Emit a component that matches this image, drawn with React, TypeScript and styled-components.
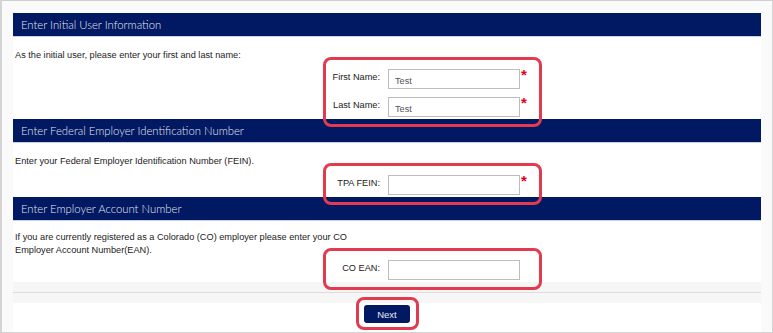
import React from 'react';
import styled, { createGlobalStyle } from 'styled-components';

const GlobalStyle = createGlobalStyle`
    html, body {
        margin: 0;
        padding: 0;
        background: #ffffff;
    }
    * {
        box-sizing: border-box;
    }
`;

const sections = [
    {
        id: 'user',
        title: 'Enter Initial User Information',
        text: 'As the initial user, please enter your first and last name:',
        top: 12,
        gap: 7,
        fields: [
            { label: 'First Name:', value: 'Test', required: true },
            { label: 'Last Name:', value: 'Test', required: true },
        ],
    },
    {
        id: 'fein',
        title: 'Enter Federal Employer Identification Number',
        text: 'Enter your Federal Employer Identification Number (FEIN).',
        top: 12,
        gap: 7,
        fields: [{ label: 'TPA FEIN:', value: '', required: true }],
    },
    {
        id: 'ean',
        title: 'Enter Employer Account Number',
        text: 'If you are currently registered as a Colorado (CO) employer please enter your CO Employer Account Number(EAN).',
        top: 10,
        gap: 3,
        fields: [{ label: 'CO EAN:', value: '', required: false }],
    },
];

const App = () => {
    return (
        <>
            <GlobalStyle />
            <Page>
                <Panel>
                    {sections.map((section) => (
                        <Section key={section.id}>
                            <SectionHeader>{section.title}</SectionHeader>
                            <SectionBody $top={section.top}>
                                <Description>{section.text}</Description>
                                <Fields $gap={section.gap}>
                                    <Highlight />
                                    {section.fields.map((field) => (
                                        <React.Fragment key={field.label}>
                                            <Label>{field.label}</Label>
                                            <InputCell>
                                                <Input type="text" defaultValue={field.value} />
                                                {field.required && <Required>*</Required>}
                                            </InputCell>
                                        </React.Fragment>
                                    ))}
                                </Fields>
                            </SectionBody>
                        </Section>
                    ))}
                    <Divider />
                    <Footer>
                        <ButtonWrap>
                            <Highlight $button />
                            <NextButton type="button">Next</NextButton>
                        </ButtonWrap>
                    </Footer>
                </Panel>
            </Page>
        </>
    );
};

export default App;

const Page = styled.div`
    width: 773px;
    height: 333px;
    padding: 12px 12px 0 11px;
    background: #fafafa;
    border-top: 1px solid #cfcfcf;
    border-left: 2px solid #d4d4d4;
    border-right: 1px solid #d4d4d4;
    border-bottom: 1px solid #d4d4d4;
    font-family: 'Liberation Sans', Arial, sans-serif;
    overflow: hidden;
`;

const Panel = styled.div`
    width: 748px;
    background: #ffffff;
`;

const Section = styled.div`
    display: flex;
    flex-direction: column;
`;

const SectionHeader = styled.div`
    height: 24px;
    padding-left: 8px;
    display: flex;
    align-items: center;
    background: #011862;
    color: #e4e7f0;
    font-family: Lato, 'Open Sans', sans-serif;
    font-weight: 300;
    font-size: 11.3px;
    border-bottom: 1px solid #c9d0e6;
`;

const SectionBody = styled.div<{ $top: number }>`
    padding: ${(props) => props.$top}px 0 2px 2px;
    background: #ffffff;
`;

const Description = styled.div`
    max-width: 342px;
    font-size: 9.2px;
    line-height: 13px;
    color: #222222;
`;

const Fields = styled.div<{ $gap: number }>`
    position: relative;
    display: grid;
    grid-template-columns: 1fr 1fr;
    row-gap: 8px;
    margin-top: ${(props) => props.$gap}px;
`;

const Highlight = styled.div<{ $button?: boolean }>`
    position: absolute;
    top: ${(props) => (props.$button ? '-8px' : '-12px')};
    bottom: ${(props) => (props.$button ? '-7px' : '-10px')};
    left: ${(props) => (props.$button ? '-8px' : 'calc(50% - 65px)')};
    ${(props) => (props.$button ? 'right: -9px;' : 'width: 219px;')}
    border: 3px solid #e23b50;
    border-radius: 8px;
    pointer-events: none;
`;

const Label = styled.div`
    justify-self: end;
    padding: 3px 8px 0 0;
    font-size: 9.2px;
    color: #222222;
`;

const InputCell = styled.div`
    display: flex;
    align-items: flex-start;
`;

const Input = styled.input`
    width: 132px;
    height: 20px;
    padding: 3px 6px 0;
    border: 1px solid #bdbdbd;
    font-family: 'Liberation Sans', Arial, sans-serif;
    font-size: 9.2px;
    color: #555555;
    background: #ffffff;
    outline: none;
`;

const Required = styled.span`
    margin: -2px 0 0 1px;
    color: #e3001b;
    font-size: 15px;
    font-weight: bold;
    line-height: 15px;
`;

const Divider = styled.div`
    height: 21px;
    background: linear-gradient(#f6f6f6 0 10px, #dcdcdc 10px 11px, #f6f6f6 11px);
`;

const Footer = styled.div`
    display: flex;
    justify-content: center;
    padding: 2px 0 10px;
`;

const ButtonWrap = styled.div`
    position: relative;
    display: flex;
`;

const NextButton = styled.button`
    width: 46px;
    height: 18px;
    padding: 0;
    border: none;
    border-radius: 3px;
    background: #011862;
    color: #e8ebf3;
    font-family: 'Liberation Sans', Arial, sans-serif;
    font-size: 9.5px;
    cursor: pointer;
`;
